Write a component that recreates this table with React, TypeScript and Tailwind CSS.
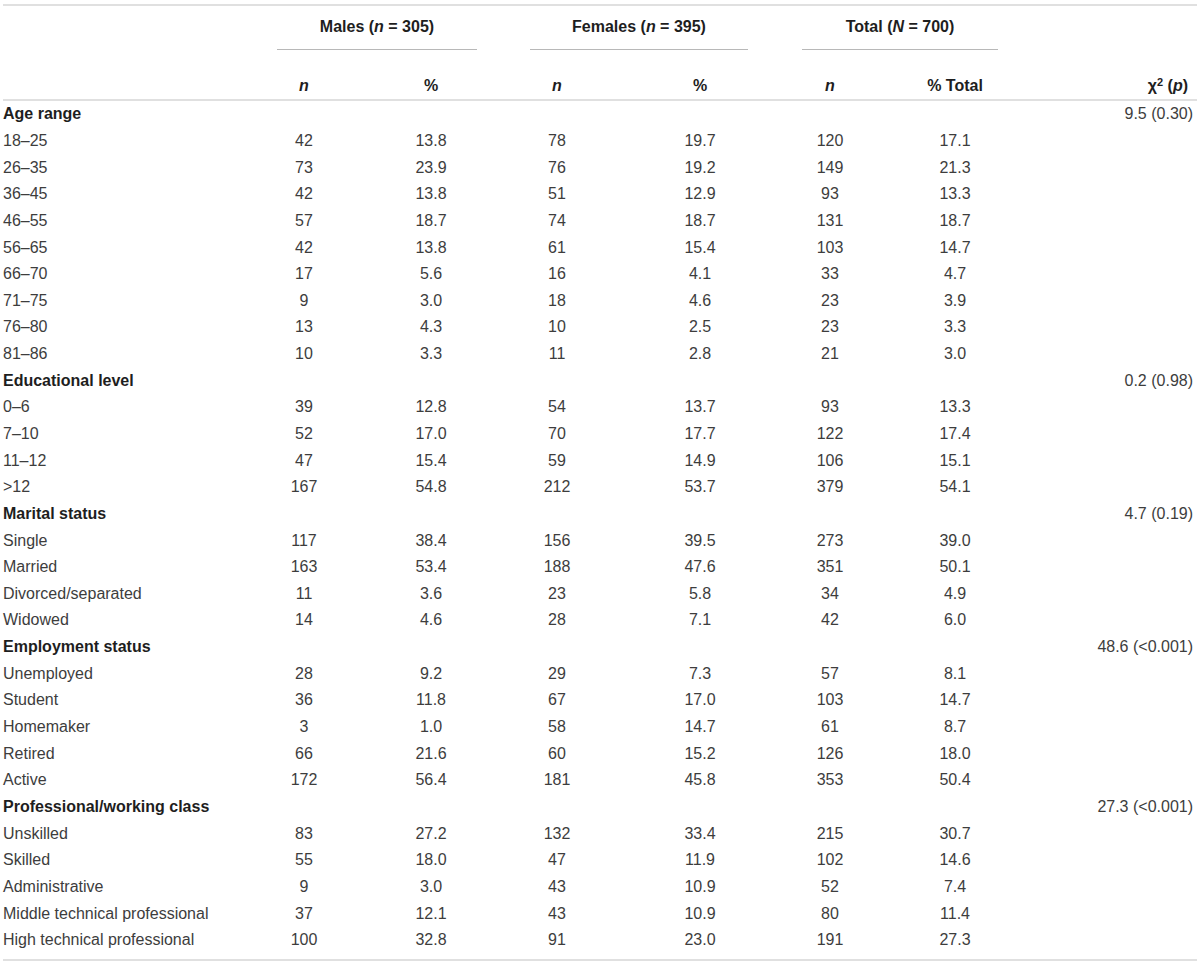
import React from "react";

type Row = { label: string; group?: boolean; v?: string[]; chi?: string };

const G = (label: string, chi: string): Row => ({ label, group: true, chi });
const R = (label: string, ...v: string[]): Row => ({ label, v });

const rows: Row[] = [
  G("Age range", "9.5 (0.30)"),
  R("18–25", "42", "13.8", "78", "19.7", "120", "17.1"),
  R("26–35", "73", "23.9", "76", "19.2", "149", "21.3"),
  R("36–45", "42", "13.8", "51", "12.9", "93", "13.3"),
  R("46–55", "57", "18.7", "74", "18.7", "131", "18.7"),
  R("56–65", "42", "13.8", "61", "15.4", "103", "14.7"),
  R("66–70", "17", "5.6", "16", "4.1", "33", "4.7"),
  R("71–75", "9", "3.0", "18", "4.6", "23", "3.9"),
  R("76–80", "13", "4.3", "10", "2.5", "23", "3.3"),
  R("81–86", "10", "3.3", "11", "2.8", "21", "3.0"),
  G("Educational level", "0.2 (0.98)"),
  R("0–6", "39", "12.8", "54", "13.7", "93", "13.3"),
  R("7–10", "52", "17.0", "70", "17.7", "122", "17.4"),
  R("11–12", "47", "15.4", "59", "14.9", "106", "15.1"),
  R(">12", "167", "54.8", "212", "53.7", "379", "54.1"),
  G("Marital status", "4.7 (0.19)"),
  R("Single", "117", "38.4", "156", "39.5", "273", "39.0"),
  R("Married", "163", "53.4", "188", "47.6", "351", "50.1"),
  R("Divorced/separated", "11", "3.6", "23", "5.8", "34", "4.9"),
  R("Widowed", "14", "4.6", "28", "7.1", "42", "6.0"),
  G("Employment status", "48.6 (<0.001)"),
  R("Unemployed", "28", "9.2", "29", "7.3", "57", "8.1"),
  R("Student", "36", "11.8", "67", "17.0", "103", "14.7"),
  R("Homemaker", "3", "1.0", "58", "14.7", "61", "8.7"),
  R("Retired", "66", "21.6", "60", "15.2", "126", "18.0"),
  R("Active", "172", "56.4", "181", "45.8", "353", "50.4"),
  G("Professional/working class", "27.3 (<0.001)"),
  R("Unskilled", "83", "27.2", "132", "33.4", "215", "30.7"),
  R("Skilled", "55", "18.0", "47", "11.9", "102", "14.6"),
  R("Administrative", "9", "3.0", "43", "10.9", "52", "7.4"),
  R("Middle technical professional", "37", "12.1", "43", "10.9", "80", "11.4"),
  R("High technical professional", "100", "32.8", "91", "23.0", "191", "27.3"),
];

// label | n | gap | % | gap | n | gap | % | gap | n | gap | % | gap | chi
const cols = "grid grid-cols-[264px_80px_47px_80px_46px_80px_63px_80px_50px_80px_45px_80px_85px_113px]";
const starts = ["col-start-2", "col-start-4", "col-start-6", "col-start-8", "col-start-10", "col-start-12"];

const groups = [
  { name: "Males", sym: "n", num: "305", cls: "ml-[277px] w-[200px]" },
  { name: "Females", sym: "n", num: "395", cls: "ml-[53px] w-[218px]" },
  { name: "Total", sym: "N", num: "700", cls: "ml-[54px] w-[196px]" },
];

export default function App() {
  return (
    <div className="w-[1200px] h-[966px] bg-white text-[#3d3d3d] text-[16px] pt-[4px]" style={{ fontFamily: '"Liberation Sans", Arial, sans-serif' }}>
      <div className="mx-[3px] h-0 border-t-2 border-[#e0e0e0]" />
      {/* group headers */}
      <div className="flex h-[45px] font-bold text-[#1e1e1e]">
        {groups.map(g => (
          <div key={g.name} className={`${g.cls} flex flex-col items-center pt-[11px]`}>
            <span className="leading-[20px]">
              {g.name} (<i>{g.sym}</i> = {g.num})
            </span>
            <div className="mt-[12px] h-px w-full bg-[#b8b8b8]" />
          </div>
        ))}
      </div>
      {/* sub headers */}
      <div className={`${cols} h-[48px] items-center font-bold text-[#1e1e1e] pt-[22px]`}>
        <i className="col-start-2 text-center">n</i>
        <span className="col-start-4 text-center">%</span>
        <i className="col-start-6 text-center">n</i>
        <span className="col-start-8 text-center">%</span>
        <i className="col-start-10 text-center">n</i>
        <span className="col-start-12 text-center">% Total</span>
        <span className="col-start-14 text-right pr-[5px]">
          χ<sup className="text-[11px]">2</sup> (<i>p</i>)
        </span>
      </div>
      <div className="mx-[3px] h-0 border-t-2 border-[#e0e0e0]" />
      {/* body */}
      <div className="pb-[5px]">
        {rows.map((r, i) => (
          <div key={i} className={`${cols} h-[26.65px] items-center`}>
            <span className={r.group ? "col-start-1 pl-[3px] font-bold text-[#1e1e1e]" : "col-start-1 pl-[3px]"}>{r.label}</span>
            {r.v?.map((x, j) => (
              <span key={j} className={`${starts[j]} text-center`}>
                {x}
              </span>
            ))}
            {r.chi && <span className="col-start-14 text-right">{r.chi}</span>}
          </div>
        ))}
      </div>
      <div className="mx-[3px] h-0 border-t-2 border-[#e0e0e0]" />
    </div>
  );
}
